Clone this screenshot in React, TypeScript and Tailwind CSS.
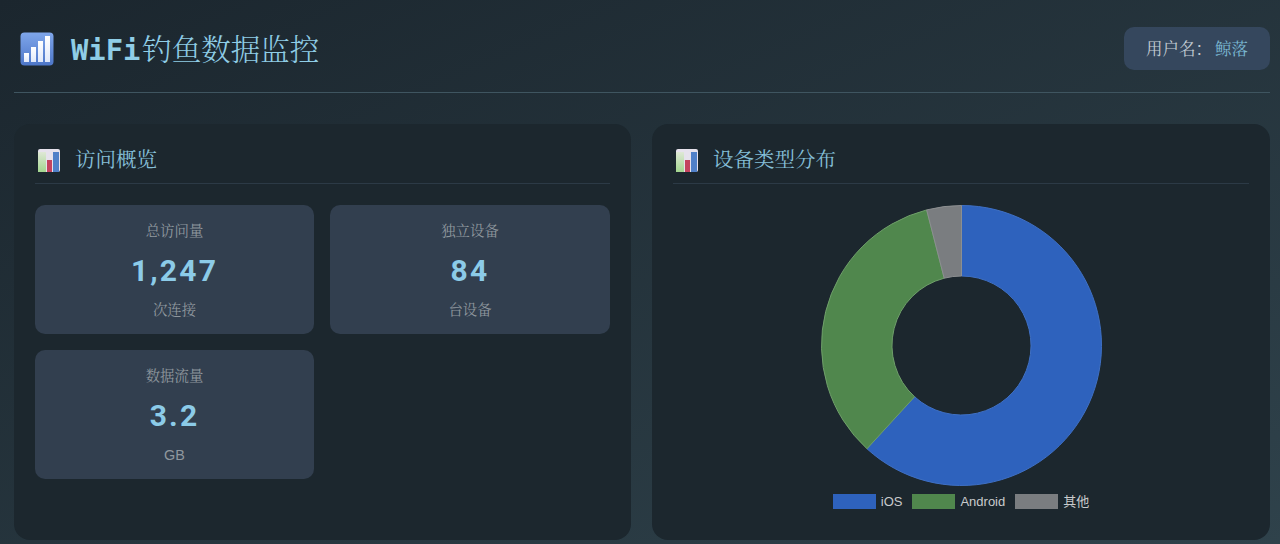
const stats = [
  { label: '总访问量', value: '1,247', unit: '次连接' },
  { label: '独立设备', value: '84', unit: '台设备' },
  { label: '数据流量', value: '3.2', unit: 'GB' },
];

function HeaderIcon() {
  return (
    <svg width="34" height="34" viewBox="0 0 34 34" className="shrink-0">
      <defs>
        <linearGradient id="tile" x1="0" y1="0" x2="0" y2="1">
          <stop offset="0" stopColor="#7fa6ea" />
          <stop offset="1" stopColor="#4d76c8" />
        </linearGradient>
        <linearGradient id="bar" x1="0" y1="0" x2="0" y2="1">
          <stop offset="0" stopColor="#ffffff" />
          <stop offset="1" stopColor="#dfe8fa" />
        </linearGradient>
      </defs>
      <rect x="0.5" y="0.5" width="33" height="33" rx="4" fill="url(#tile)" />
      <rect x="4" y="21" width="5" height="9" fill="url(#bar)" />
      <rect x="11" y="15" width="5" height="15" fill="url(#bar)" />
      <rect x="18" y="9" width="5" height="21" fill="url(#bar)" />
      <rect x="25" y="4" width="5" height="26" fill="url(#bar)" />
    </svg>
  );
}

function SectionIcon({ id }: { id: string }) {
  return (
    <svg width="22" height="23" viewBox="0 0 22 23" className="shrink-0">
      <defs>
        <linearGradient id={id} x1="0" y1="0" x2="0" y2="1">
          <stop offset="0" stopColor="#dfe8d6" />
          <stop offset="1" stopColor="#a3d68f" />
        </linearGradient>
      </defs>
      <rect width="22" height="23" rx="2" fill="#e6e2ec" />
      <rect x="0" y="3" width="8" height="20" fill={`url(#${id})`} />
      <rect x="9" y="11" width="5" height="12" fill="#c4435e" />
      <rect x="15" y="3" width="6" height="20" fill="#5080c8" />
    </svg>
  );
}

function Donut() {
  const size = 281;
  const c = size / 2;
  const outer = 140;
  const inner = 69.5;
  const point = (r: number, t: number) => {
    const a = t * 2 * Math.PI;
    return `${c + r * Math.sin(a)} ${c - r * Math.cos(a)}`;
  };
  const slices = [
    { fill: '#2e62bd', edge: '#3f70c4', from: 0, to: 0.618 },
    { fill: '#50874d', edge: '#6f9f6a', from: 0.618, to: 0.96 },
    { fill: '#7a7d80', edge: '#8c8f91', from: 0.96, to: 1 },
  ];
  return (
    <svg width={size} height={size} viewBox={`0 0 ${size} ${size}`}>
      {slices.map((s) => {
        const large = s.to - s.from > 0.5 ? 1 : 0;
        return (
          <path
            key={s.fill}
            fill={s.fill}
            stroke={s.edge}
            d={`M${point(outer, s.from)} A${outer} ${outer} 0 ${large} 1 ${point(outer, s.to)} L${point(inner, s.to)} A${inner} ${inner} 0 ${large} 0 ${point(inner, s.from)} Z`}
          />
        );
      })}
    </svg>
  );
}

function Legend({ color, label }: { color: string; label: string }) {
  return (
    <div className="flex items-center gap-[5px]">
      <span className="h-[15px] w-[43px]" style={{ backgroundColor: color }} />
      <span
        className="text-[13px] text-[#c9cbcd]"
        style={{ fontFamily: '"Liberation Sans", "Noto Sans CJK SC", sans-serif' }}
      >
        {label}
      </span>
    </div>
  );
}

function Heading({ id, title }: { id: string; title: string }) {
  return (
    <div className="flex h-[60px] items-center gap-[15px] border-b border-[#2c3a46] pt-[13px] pl-[3px]">
      <SectionIcon id={id} />
      <h2 className="text-[20.5px] font-normal text-[#85bfd8]">{title}</h2>
    </div>
  );
}

export default function App() {
  return (
    <div
      className="h-[544px] overflow-hidden bg-gradient-to-br from-[#1b262e] to-[#2f424b] pt-px pr-[10px] pl-[14px]"
      style={{ fontFamily: '"Liberation Sans", "Noto Serif CJK SC", serif' }}
    >
      <header className="flex h-[92px] items-center justify-between border-b border-[#3f5560] pt-1">
        <div className="flex items-center gap-[17px] pl-[6px]">
          <HeaderIcon />
          <h1 className="mt-[3px] flex items-baseline gap-[2px] font-normal text-[#8fcde6]">
            <span className="text-[28.8px] font-bold" style={{ fontFamily: '"DejaVu Sans Mono", monospace' }}>WiFi</span>
            <span className="text-[29.5px] font-light">钓鱼数据监控</span>
          </h1>
        </div>
        <div className="flex h-[43px] w-[146px] items-center justify-center rounded-[10px] bg-[#35475d] pt-px text-[16.5px] text-[#c3ccd3]">
          用户名：<span className="ml-[3px] text-[#7ab8d3]">鲸落</span>
        </div>
      </header>

      <main className="mt-[31px] grid grid-cols-[617px_618px] gap-[21px]">
        <section className="h-[416px] rounded-2xl bg-[#1c272e] px-[21px]">
          <Heading id="green-a" title="访问概览" />
          <div className="mt-[21px] grid grid-cols-[279px_280px] gap-4">
            {stats.map((s) => (
              <div key={s.label} className="flex h-[129px] flex-col items-center rounded-[10px] bg-[#323f4f] pt-4">
                <div className="text-[14.4px] leading-5 text-[#8f979e]">{s.label}</div>
                <div
                  className="mt-[11px] text-[30px] leading-[38px] font-bold tracking-[2.2px] text-[#8ccbe8]"
                  style={{ fontFamily: 'Roboto, sans-serif' }}
                >
                  {s.value}
                </div>
                <div className="mt-[10px] text-[14.4px] leading-5 text-[#8f979e]">{s.unit}</div>
              </div>
            ))}
          </div>
        </section>

        <section className="h-[416px] rounded-2xl bg-[#1c272e] px-[21px]">
          <Heading id="green-b" title="设备类型分布" />
          <div className="mt-[21px] flex flex-col items-center">
            <Donut />
            <div className="mt-[6px] flex items-center gap-[10px]">
              <Legend color="#2e62bd" label="iOS" />
              <Legend color="#50874d" label="Android" />
              <Legend color="#7a7d80" label="其他" />
            </div>
          </div>
        </section>
      </main>
    </div>
  );
}
